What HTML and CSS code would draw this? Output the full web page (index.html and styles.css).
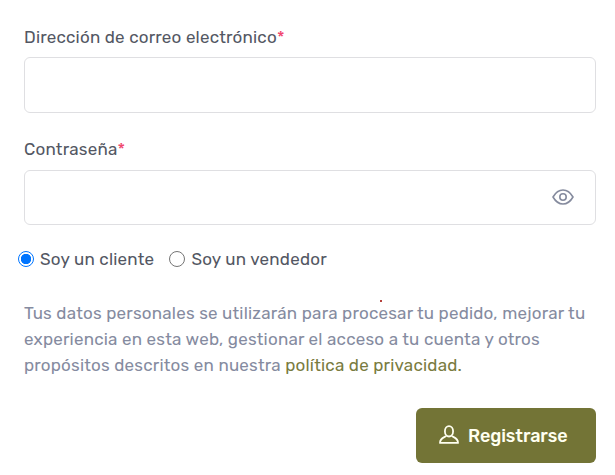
FILE: index.html
```html
<!DOCTYPE html>
<html lang="es">
<head>
<meta charset="utf-8">
<title>Registrarse</title>
<link rel="stylesheet" href="styles.css">
</head>
<body>
<form class="register">
  <label class="label label-email" for="email"><span class="label-text">Dirección de correo electrónico</span><span class="required">*</span></label>
  <input class="field field-email" id="email" type="email">
  <label class="label label-password" for="password"><span class="label-text">Contraseña</span><span class="required">*</span></label>
  <div class="field field-password">
    <input class="password-input" id="password" type="password">
    <svg class="eye" viewBox="0 0 22 16" fill="none" stroke="currentColor" stroke-width="1.6"><path d="M1 8Q5 1 11 1T21 8Q17 15 11 15T1 8Z" stroke-linejoin="round"/><circle cx="11" cy="8" r="3.2"/></svg>
  </div>
  <div class="roles">
    <label class="role"><input class="radio" type="radio" name="role" checked><span class="role-text">Soy un cliente</span></label>
    <label class="role"><input class="radio" type="radio" name="role"><span class="role-text">Soy un vendedor</span></label>
  </div>
  <p class="privacy">
    <span class="line">Tus datos personales se utilizarán para procesar tu pedido, mejorar tu</span>
    <span class="line">experiencia en esta web, gestionar el acceso a tu cuenta y otros</span>
    <span class="line">propósitos descritos en nuestra <a class="link" href="#">política de privacidad.</a></span>
    <i class="speck"></i>
  </p>
  <button class="submit" type="button">
    <svg class="user" viewBox="0 0 20 20" fill="none" stroke="currentColor" stroke-width="1.8"><ellipse cx="10" cy="6.3" rx="4.1" ry="5.2"/><path d="M7 10.8C6.6 12.4 1 12.3 1 17.9H19C19 12.3 13.4 12.4 13 10.8" stroke-linejoin="round"/></svg>
    <span class="submit-text">Registrarse</span>
  </button>
</form>
</body>
</html>
```

FILE: styles.css
```css
* { box-sizing: border-box; }
body {
  margin: 0;
  background: #fff;
  color: #535763;
  font: 400 17px/26px Rubik, Roboto, sans-serif;
}
.register {
  display: flex;
  flex-direction: column;
  padding: 24px 19px 0 24px;
}
.label { height: 26px; white-space: nowrap; }
.label-text { letter-spacing: 0.2px; }
.required { color: #f0486f; }
.field {
  width: 572px;
  border: 1px solid #dfdfe2;
  border-radius: 6px;
  background: #fff;
}
.field-email { height: 56px; margin-top: 7px; }
.label-password { margin-top: 23px; }
.field-password {
  display: flex;
  align-items: center;
  height: 55px;
  margin-top: 8px;
  padding-right: 21px;
}
.password-input {
  flex: 1;
  height: 100%;
  border: 0;
  outline: 0;
  background: none;
}
.eye { width: 22px; height: 16px; margin-bottom: 1px; color: #858b9e; }
.roles {
  display: flex;
  gap: 15px;
  height: 26px;
  margin: 21px 0 0 -6px;
  white-space: nowrap;
}
.role { display: flex; align-items: center; gap: 6px; }
.radio {
  appearance: none;
  flex: none;
  width: 16px;
  height: 16px;
  margin: 0;
  border: 1px solid #757575;
  border-radius: 50%;
}
.radio:checked {
  border: 1px solid #0075ff;
  background: radial-gradient(circle, #0075ff 4.9px, #fff 5.5px);
}
.role-text { letter-spacing: 0.22px; }
.privacy {
  position: relative;
  margin: 28px 0 0;
  color: #858ba0;
}
.line { display: block; white-space: nowrap; letter-spacing: 0.2px; }
.link { color: #797b40; text-decoration: none; }
.speck {
  position: absolute;
  top: 0;
  left: 356px;
  width: 2px;
  height: 2px;
  background: #b5423c;
}
.submit {
  display: flex;
  align-items: center;
  align-self: flex-end;
  gap: 9px;
  width: 180px;
  height: 55px;
  margin-top: 30px;
  padding: 0 0 0 23px;
  border: 0;
  border-radius: 6px;
  background: #737436;
  color: #fffff0;
  font: 500 18px/26px Rubik, Roboto, sans-serif;
}
.user { width: 20px; height: 20px; margin-bottom: 1px; }
.submit-text { letter-spacing: -0.1px; }
```
